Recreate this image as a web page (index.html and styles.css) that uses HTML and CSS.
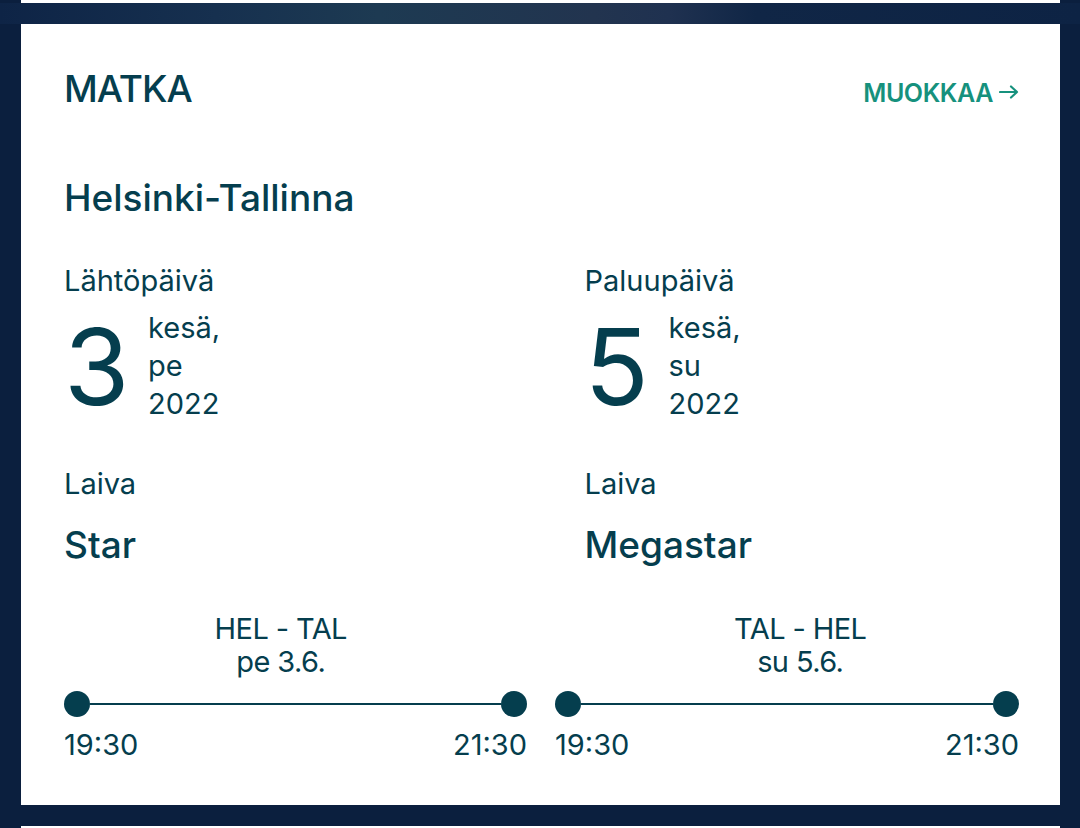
FILE: index.html
```html
<!DOCTYPE html>
<html lang="fi">
<head>
<meta charset="utf-8">
<title>Matka</title>
<link rel="stylesheet" href="styles.css">
</head>
<body>
<div class="page">
  <div class="prev-card"></div>
  <div class="backdrop"></div>
  <section class="card">
    <header class="card-head">
      <h2 class="title">MATKA</h2>
      <a class="edit" href="#">MUOKKAA<svg class="arrow" width="20" height="14" viewBox="0 0 20 14"><path d="M1 7H18M12 1.5L18 7L12 12.5" fill="none" stroke="currentColor" stroke-width="2.2" stroke-linecap="round" stroke-linejoin="round"/></svg></a>
    </header>
    <h3 class="route">Helsinki-Tallinna</h3>
    <div class="info">
      <div class="col">
        <div class="label">Lähtöpäivä</div>
        <div class="date">
          <span class="day">3</span>
          <span class="date-rest">kesä,<br>pe<br>2022</span>
        </div>
        <div class="label label-ship">Laiva</div>
        <div class="ship">Star</div>
      </div>
      <div class="col">
        <div class="label">Paluupäivä</div>
        <div class="date">
          <span class="day">5</span>
          <span class="date-rest">kesä,<br>su<br>2022</span>
        </div>
        <div class="label label-ship">Laiva</div>
        <div class="ship">Megastar</div>
      </div>
    </div>
    <div class="legs">
      <div class="leg leg-out">
        <div class="leg-title">HEL - TAL<br>pe 3.6.</div>
        <div class="track"><span class="dot"></span><span class="bar"></span><span class="dot"></span></div>
        <div class="times"><span>19:30</span><span>21:30</span></div>
      </div>
      <div class="leg leg-ret">
        <div class="leg-title">TAL - HEL<br>su 5.6.</div>
        <div class="track"><span class="dot"></span><span class="bar"></span><span class="dot"></span></div>
        <div class="times"><span>19:30</span><span>21:30</span></div>
      </div>
    </div>
  </section>
  <div class="next-card"></div>
</div>
</body>
</html>
```
FILE: styles.css
```css
* { box-sizing: border-box; }
html, body { margin: 0; padding: 0; }
body {
  width: 1080px;
  height: 828px;
  overflow: hidden;
  background: #0b1f3e;
  font-family: Inter, "Noto Sans", sans-serif;
  color: #053e4e;
}
.page {
  display: flex;
  flex-direction: column;
  height: 828px;
  background: #0b1f3e;
}
.prev-card {
  flex: none;
  height: 3px;
  margin: 0 20px 0 21px;
  background: #fff;
}
.backdrop {
  flex: none;
  height: 21px;
  background: linear-gradient(90deg, #0e2446 0%, #16304f 20%, #1d3a52 35%, #22344f 55%, #1f3150 62%, #102646 70%, #0d2344 100%);
}
.card {
  flex: none;
  background: #fff;
  margin: 0 20px 0 21px;
  height: 781px;
  padding: 43px 41px 0 43px;
}
.next-card {
  flex: none;
  margin: 21px 20px 0 21px;
  height: 10px;
  background: #fff;
}
.card-head {
  display: flex;
  justify-content: space-between;
  align-items: baseline;
}
.title {
  margin: 0;
  font-size: 37px;
  line-height: 44px;
  font-weight: 500;
  letter-spacing: -1px;
}
.edit {
  color: #16917d;
  text-decoration: none;
  font-size: 25px;
  font-weight: 600;
  letter-spacing: -0.4px;
  display: flex;
  align-items: center;
  gap: 6px;
}
.arrow { display: block; position: relative; top: -1px; }
.route {
  margin: 65px 0 0;
  font-size: 37px;
  line-height: 44px;
  font-weight: 500;
  letter-spacing: 0;
}
.info {
  display: grid;
  grid-template-columns: 1fr 1fr;
  column-gap: 86px;
}
.label {
  margin-top: 43px;
  font-size: 29px;
  line-height: 36px;
  font-weight: 400;
}
.date {
  display: flex;
  align-items: flex-start;
  margin-top: 10px;
}
.day {
  margin-top: 8px;
  font-size: 106px;
  line-height: 100px;
  font-weight: 400;
  width: 84px;
  letter-spacing: -2px;
}
.date-rest {
  font-size: 29px;
  line-height: 38px;
}
.label-ship { margin-top: 43px; }
.ship {
  margin-top: 21px;
  font-size: 37px;
  line-height: 44px;
  font-weight: 500;
  letter-spacing: 0;
}
.legs {
  display: grid;
  grid-template-columns: 1fr 1fr;
  margin: 45px -41px 0 -43px;
}
.leg-title {
  text-align: center;
  font-size: 29px;
  line-height: 33px;
  letter-spacing: -0.6px;
}
.leg-out .track,
.leg-out .times { padding: 0 13.5px 0 43px; }
.leg-ret .track,
.leg-ret .times { padding: 0 41px 0 14.5px; }
.track {
  display: flex;
  align-items: center;
  margin-top: 13px;
  height: 26px;
}
.dot {
  width: 26px;
  height: 26px;
  border-radius: 50%;
  background: #053e4e;
  flex: none;
}
.bar {
  flex: 1;
  height: 2px;
  background: #053e4e;
}
.times {
  display: flex;
  justify-content: space-between;
  margin-top: 10px;
  font-size: 29px;
  line-height: 36px;
}
```
